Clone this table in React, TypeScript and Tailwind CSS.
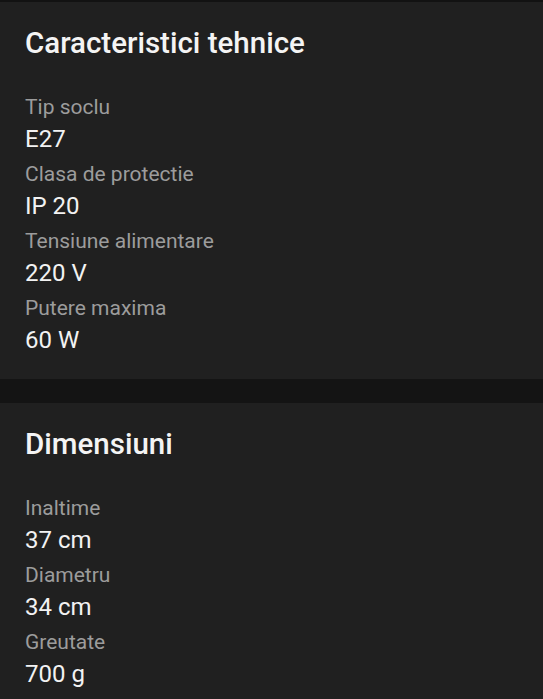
const sections = [
  {
    title: "Caracteristici tehnice",
    rows: [
      { label: "Tip soclu", value: "E27" },
      { label: "Clasa de protectie", value: "IP 20" },
      { label: "Tensiune alimentare", value: "220 V" },
      { label: "Putere maxima", value: "60 W" },
    ],
  },
  {
    title: "Dimensiuni",
    rows: [
      { label: "Inaltime", value: "37 cm" },
      { label: "Diametru", value: "34 cm" },
      { label: "Greutate", value: "700 g" },
    ],
  },
];

function SpecSection({ title, rows }: (typeof sections)[number]) {
  return (
    <section className="bg-[#202020] px-[25px] pt-6 pb-[23px]">
      <h2 className="text-[29.5px] leading-[34px] font-medium text-[#f4f4f4]">{title}</h2>
      <dl className="mt-[31px] flex flex-col gap-[3px]">
        {rows.map((row) => (
          <div key={row.label} className="flex flex-col">
            <dt className="text-[21px] leading-[32px] text-[#9c9c9c]">{row.label}</dt>
            <dd className="text-[24px] leading-[32px] text-[#f2f2f2]">{row.value}</dd>
          </div>
        ))}
      </dl>
    </section>
  );
}

export default function App() {
  return (
    <div
      className="min-h-[699px] w-[543px] bg-[#202020] border-t-2 border-[#121212]"
      style={{ fontFamily: "Roboto, 'Liberation Sans', sans-serif" }}
    >
      {sections.map((s, i) => (
        <div key={s.title}>
          {i > 0 && <div className="h-[24px] bg-[#141414]" />}
          <SpecSection {...s} />
        </div>
      ))}
    </div>
  );
}
